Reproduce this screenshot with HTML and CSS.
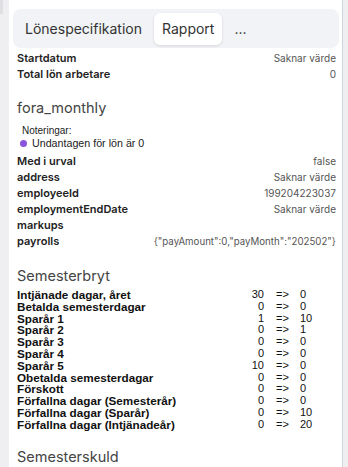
FILE: index.html
```html
<!DOCTYPE html>
<html lang="sv">
<head>
<meta charset="utf-8">
<link rel="stylesheet" href="styles.css">
</head>
<body>
<div class="side-mark"></div>
<div class="panel">
  <div class="tabs">
    <div class="tab">Lönespecifikation</div>
    <div class="tab active">Rapport</div>
    <div class="tab">...</div>
  </div>
  <div class="kv">
    <div class="row"><span class="k">Startdatum</span><span class="v">Saknar värde</span></div>
    <div class="row"><span class="k">Total lön arbetare</span><span class="v">0</span></div>
  </div>

  <h2 class="heading first">fora_monthly</h2>
  <div class="notes-title">Noteringar:</div>
  <div class="note"><span class="dot"></span>Undantagen för lön är 0</div>
  <div class="kv">
    <div class="row"><span class="k">Med i urval</span><span class="v">false</span></div>
    <div class="row"><span class="k">address</span><span class="v">Saknar värde</span></div>
    <div class="row"><span class="k">employeeId</span><span class="v">199204223037</span></div>
    <div class="row"><span class="k">employmentEndDate</span><span class="v">Saknar värde</span></div>
    <div class="row"><span class="k">markups</span><span class="v"></span></div>
    <div class="row"><span class="k">payrolls</span><span class="v payload">{"payAmount":0,"payMonth":"202502"}</span></div>
  </div>

  <h2 class="heading mid">Semesterbryt</h2>
  <table class="brk">
    <colgroup><col class="c1"><col class="c2"><col class="c3"><col class="c4"></colgroup>
    <tr><td class="bl">Intjänade dagar, året</td><td class="n">30</td><td class="ar">=&gt;</td><td class="m">0</td></tr>
    <tr><td class="bl">Betalda semesterdagar</td><td class="n">0</td><td class="ar">=&gt;</td><td class="m">0</td></tr>
    <tr><td class="bl">Sparår 1</td><td class="n">1</td><td class="ar">=&gt;</td><td class="m">10</td></tr>
    <tr><td class="bl">Sparår 2</td><td class="n">0</td><td class="ar">=&gt;</td><td class="m">1</td></tr>
    <tr><td class="bl">Sparår 3</td><td class="n">0</td><td class="ar">=&gt;</td><td class="m">0</td></tr>
    <tr><td class="bl">Sparår 4</td><td class="n">0</td><td class="ar">=&gt;</td><td class="m">0</td></tr>
    <tr><td class="bl">Sparår 5</td><td class="n">10</td><td class="ar">=&gt;</td><td class="m">0</td></tr>
    <tr><td class="bl">Obetalda semesterdagar</td><td class="n">0</td><td class="ar">=&gt;</td><td class="m">0</td></tr>
    <tr><td class="bl">Förskott</td><td class="n">0</td><td class="ar">=&gt;</td><td class="m">0</td></tr>
    <tr><td class="bl">Förfallna dagar (Semesterår)</td><td class="n">0</td><td class="ar">=&gt;</td><td class="m">0</td></tr>
    <tr><td class="bl">Förfallna dagar (Sparår)</td><td class="n">0</td><td class="ar">=&gt;</td><td class="m">10</td></tr>
    <tr><td class="bl">Förfallna dagar (Intjänadeår)</td><td class="n">0</td><td class="ar">=&gt;</td><td class="m">20</td></tr>
  </table>

  <h2 class="heading last">Semesterskuld</h2>
</div>
</body>
</html>
```
FILE: styles.css
```css
html, body {
  margin: 0;
  padding: 0;
  background: #efeff1;
  height: 467px;
  overflow: hidden;
}
body {
  position: relative;
  font-family: Inter, "Liberation Sans", sans-serif;
  color: #222;
}
.side-mark {
  position: absolute;
  left: 0;
  top: 0;
  width: 3px;
  height: 14px;
  background: #dedfe2;
}
.panel {
  margin-left: 8px;
  width: 335px;
  height: 467px;
  background: #fff;
  border-left: 1px solid #eef0f3;
  border-right: 1px solid #cdd5df;
  padding: 9px 3px 0 4px;
  box-sizing: border-box;
  overflow: hidden;
}
.tabs {
  display: flex;
  align-items: center;
  gap: 4px;
  height: 39px;
  background: #f1f3f6;
  border-radius: 8px;
  padding: 0 4px;
}
.tab {
  font-size: 14px;
  color: #333;
  padding: 0 8px;
  height: 32px;
  line-height: 32px;
  border-radius: 6px;
}
.active {
  background: #fff;
  box-shadow: 0 1px 3px rgba(0,0,0,0.12);
}
.kv {
  padding: 2px 3px 0 4px;
}
.row {
  display: flex;
  justify-content: space-between;
  align-items: center;
  height: 16px;
}
.k {
  font-size: 11px;
  font-weight: 600;
  color: #222;
}
.v {
  font-size: 10px;
  color: #555;
}
.payload {
  font-size: 9.7px;
}
.heading {
  font-size: 14.5px;
  font-weight: 400;
  color: #444;
  margin: 0;
  padding: 0 4px;
  line-height: 20px;
}
.first {
  margin-top: 16px;
}
.mid {
  margin-top: 17px;
  margin-bottom: 3px;
}
.last {
  margin-top: 16px;
}
.notes-title {
  font-family: "Liberation Sans", Arial, sans-serif;
  font-size: 10px;
  color: #222;
  padding-left: 9px;
  margin-top: 6px;
  line-height: 13px;
}
.note {
  font-family: "Liberation Sans", Arial, sans-serif;
  font-size: 10.7px;
  color: #222;
  padding-left: 7px;
  display: flex;
  align-items: center;
  gap: 5px;
  line-height: 13px;
  margin-bottom: 1px;
}
.dot {
  width: 7px;
  height: 7px;
  border-radius: 50%;
  background: #8a55dd;
}
.brk {
  font-family: "Liberation Sans", Arial, sans-serif;
  border-collapse: collapse;
  table-layout: fixed;
  width: 323px;
  margin-left: 4px;
}
.c1 { width: 231px; }
.c2 { width: 16px; }
.c3 { width: 36px; }
.c4 { width: 40px; }
.brk td {
  padding: 0;
  height: 11.8px;
  line-height: 11.8px;
  font-size: 11px;
  color: #111;
  white-space: nowrap;
}
.brk .bl {
  font-weight: 700;
  font-size: 11.7px;
}
.brk .n {
  text-align: right;
}
.brk .ar {
  padding-left: 12px;
}
```
